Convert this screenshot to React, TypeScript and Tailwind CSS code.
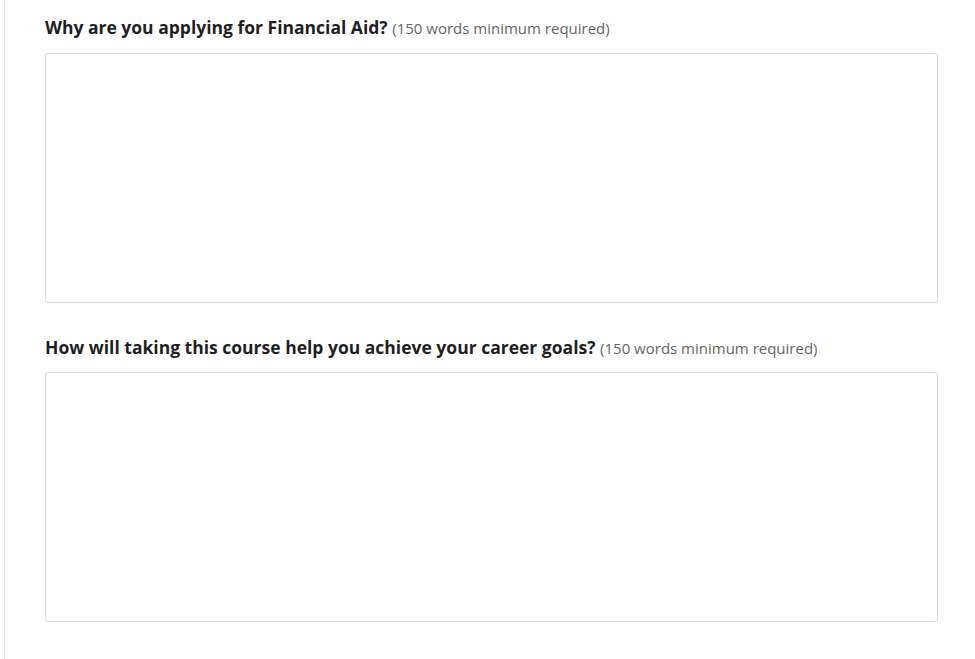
export default function App() {
  return (
    <div className="min-h-[659px] bg-white pl-[4px]" style={{ fontFamily: '"Open Sans", sans-serif' }}>
      <div className="min-h-[659px] border-l border-[#e5e5e5] pl-[40px] pr-[37px] pt-[13px]">
        <Question title="Why are you applying for Financial Aid?" />
        <div className="h-[30px]" />
        <Question title="How will taking this course help you achieve your career goals?" second />
      </div>
    </div>
  );
}

function Question({ title, second }: { title: string; second?: boolean }) {
  return (
    <div>
      <label className="block text-[17.5px] leading-[28px] text-[#1f1f1f]">
        <span className="font-bold">{title}</span>{' '}
        <span className="text-[15px] text-[#666]">(150 words minimum required)</span>
      </label>
      <textarea
        className={
          second
            ? 'mt-[10px] block h-[250px] w-full resize-none rounded-[3px] border border-[#dcdcdc] bg-white outline-none'
            : 'mt-[11px] block h-[250px] w-full resize-none rounded-[3px] border border-[#dcdcdc] bg-white outline-none'
        }
      />
    </div>
  );
}
